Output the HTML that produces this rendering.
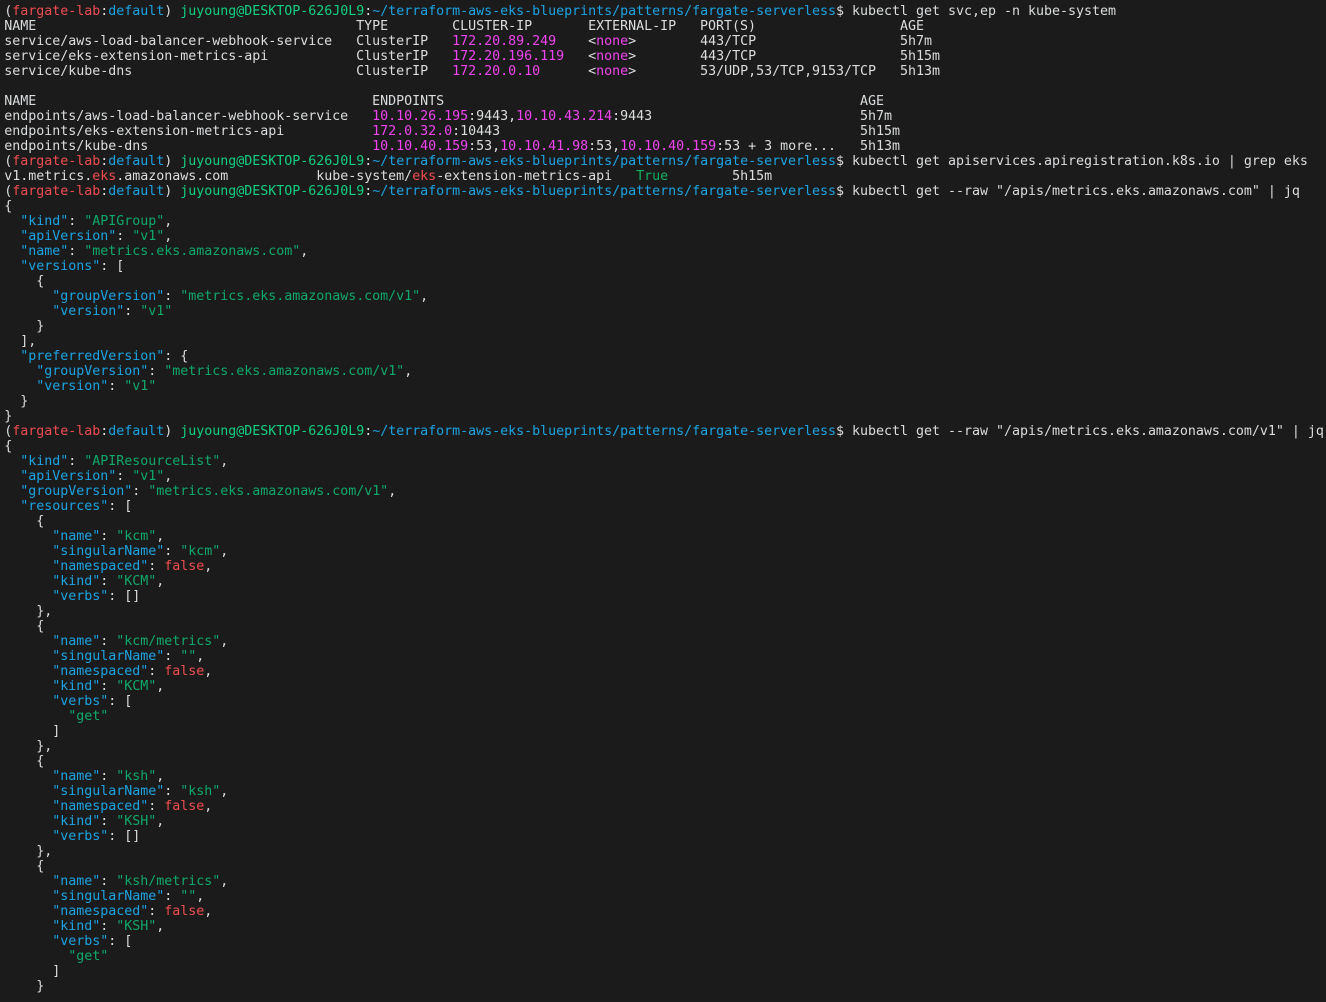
<!DOCTYPE html>
<html lang="en"><head><meta charset="utf-8"><title>Terminal</title>
<style>
html,body{margin:0;padding:0;background:#1b1b1b;width:1326px;height:1002px;overflow:hidden}
pre{position:absolute;left:4.3px;top:4px;margin:0;font:13.333px/15px "DejaVu Sans Mono","Liberation Mono",monospace;letter-spacing:-.027px;color:#dadcde;white-space:pre}
.r{color:#f04c52}.b{color:#1ca3e2}.g{color:#13cf80}.m{color:#f044f0}.s{color:#10a86a}.t{color:#13b060}
</style></head><body>
<pre>(<span class="r">fargate-lab</span>:<span class="b">default</span>) <span class="g">juyoung@DESKTOP-626J0L9</span>:<span class="b">~/terraform-aws-eks-blueprints/patterns/fargate-serverless</span>$ kubectl get svc,ep -n kube-system
NAME                                        TYPE        CLUSTER-IP       EXTERNAL-IP   PORT(S)                  AGE
service/aws-load-balancer-webhook-service   ClusterIP   <span class="m">172.20.89.249</span>    &lt;<span class="m">none</span>&gt;        443/TCP                  5h7m
service/eks-extension-metrics-api           ClusterIP   <span class="m">172.20.196.119</span>   &lt;<span class="m">none</span>&gt;        443/TCP                  5h15m
service/kube-dns                            ClusterIP   <span class="m">172.20.0.10</span>      &lt;<span class="m">none</span>&gt;        53/UDP,53/TCP,9153/TCP   5h13m

NAME                                          ENDPOINTS                                                    AGE
endpoints/aws-load-balancer-webhook-service   <span class="m">10.10.26.195</span>:9443,<span class="m">10.10.43.214</span>:9443                          5h7m
endpoints/eks-extension-metrics-api           <span class="m">172.0.32.0</span>:10443                                             5h15m
endpoints/kube-dns                            <span class="m">10.10.40.159</span>:53,<span class="m">10.10.41.98</span>:53,<span class="m">10.10.40.159</span>:53 + 3 more...   5h13m
(<span class="r">fargate-lab</span>:<span class="b">default</span>) <span class="g">juyoung@DESKTOP-626J0L9</span>:<span class="b">~/terraform-aws-eks-blueprints/patterns/fargate-serverless</span>$ kubectl get apiservices.apiregistration.k8s.io | grep eks
v1.metrics.<span class="r">eks</span>.amazonaws.com           kube-system/<span class="r">eks</span>-extension-metrics-api   <span class="t">True</span>        5h15m
(<span class="r">fargate-lab</span>:<span class="b">default</span>) <span class="g">juyoung@DESKTOP-626J0L9</span>:<span class="b">~/terraform-aws-eks-blueprints/patterns/fargate-serverless</span>$ kubectl get --raw "/apis/metrics.eks.amazonaws.com" | jq
{
  <span class="b">"kind"</span>: <span class="s">"APIGroup"</span>,
  <span class="b">"apiVersion"</span>: <span class="s">"v1"</span>,
  <span class="b">"name"</span>: <span class="s">"metrics.eks.amazonaws.com"</span>,
  <span class="b">"versions"</span>: [
    {
      <span class="b">"groupVersion"</span>: <span class="s">"metrics.eks.amazonaws.com/v1"</span>,
      <span class="b">"version"</span>: <span class="s">"v1"</span>
    }
  ],
  <span class="b">"preferredVersion"</span>: {
    <span class="b">"groupVersion"</span>: <span class="s">"metrics.eks.amazonaws.com/v1"</span>,
    <span class="b">"version"</span>: <span class="s">"v1"</span>
  }
}
(<span class="r">fargate-lab</span>:<span class="b">default</span>) <span class="g">juyoung@DESKTOP-626J0L9</span>:<span class="b">~/terraform-aws-eks-blueprints/patterns/fargate-serverless</span>$ kubectl get --raw "/apis/metrics.eks.amazonaws.com/v1" | jq
{
  <span class="b">"kind"</span>: <span class="s">"APIResourceList"</span>,
  <span class="b">"apiVersion"</span>: <span class="s">"v1"</span>,
  <span class="b">"groupVersion"</span>: <span class="s">"metrics.eks.amazonaws.com/v1"</span>,
  <span class="b">"resources"</span>: [
    {
      <span class="b">"name"</span>: <span class="s">"kcm"</span>,
      <span class="b">"singularName"</span>: <span class="s">"kcm"</span>,
      <span class="b">"namespaced"</span>: <span class="r">false</span>,
      <span class="b">"kind"</span>: <span class="s">"KCM"</span>,
      <span class="b">"verbs"</span>: []
    },
    {
      <span class="b">"name"</span>: <span class="s">"kcm/metrics"</span>,
      <span class="b">"singularName"</span>: <span class="s">""</span>,
      <span class="b">"namespaced"</span>: <span class="r">false</span>,
      <span class="b">"kind"</span>: <span class="s">"KCM"</span>,
      <span class="b">"verbs"</span>: [
        <span class="s">"get"</span>
      ]
    },
    {
      <span class="b">"name"</span>: <span class="s">"ksh"</span>,
      <span class="b">"singularName"</span>: <span class="s">"ksh"</span>,
      <span class="b">"namespaced"</span>: <span class="r">false</span>,
      <span class="b">"kind"</span>: <span class="s">"KSH"</span>,
      <span class="b">"verbs"</span>: []
    },
    {
      <span class="b">"name"</span>: <span class="s">"ksh/metrics"</span>,
      <span class="b">"singularName"</span>: <span class="s">""</span>,
      <span class="b">"namespaced"</span>: <span class="r">false</span>,
      <span class="b">"kind"</span>: <span class="s">"KSH"</span>,
      <span class="b">"verbs"</span>: [
        <span class="s">"get"</span>
      ]
    }</pre>
</body></html>
